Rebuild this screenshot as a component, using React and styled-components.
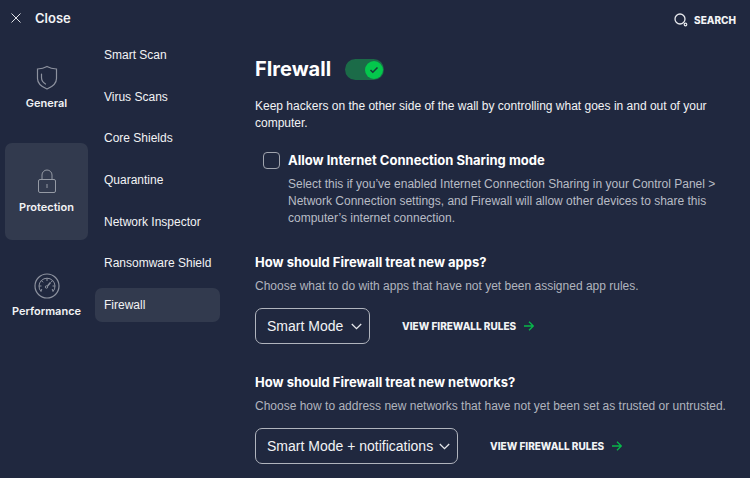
import React, { useState } from "react";
import styled, { createGlobalStyle } from "styled-components";

const menuItems = [
  "Smart Scan",
  "Virus Scans",
  "Core Shields",
  "Quarantine",
  "Network Inspector",
  "Ransomware Shield",
  "Firewall",
];

export default function App() {
  const [enabled, setEnabled] = useState(true);
  return (
    <>
      <GlobalStyle />
      <TopBar>
        <CloseButton type="button">
          <CloseIcon />
          Close
        </CloseButton>
        <SearchButton type="button">
          <SearchIcon />
          SEARCH
        </SearchButton>
      </TopBar>
      <Columns>
        <Sections aria-label="Sections">
          <SectionLink href="#general">
            <ShieldIcon />
            General
          </SectionLink>
          <SectionLink href="#protection" $active>
            <LockIcon />
            Protection
          </SectionLink>
          <SectionLink href="#performance">
            <GaugeIcon />
            Performance
          </SectionLink>
        </Sections>
        <Menu aria-label="Protection">
          {menuItems.map((item) => (
            <MenuLink href="#" key={item} $active={item === "Firewall"}>
              {item}
            </MenuLink>
          ))}
        </Menu>
        <Content>
          <TitleRow>
            <Title id="title">FIrewall</Title>
            <Switch $on={enabled}>
              <SwitchInput
                type="checkbox"
                role="switch"
                aria-labelledby="title"
                checked={enabled}
                onChange={() => setEnabled(!enabled)}
              />
              <Knob>
                <CheckIcon />
              </Knob>
            </Switch>
          </TitleRow>
          <Intro>
            Keep hackers on the other side of the wall by controlling what goes
            in and out of your computer.
          </Intro>
          <Option>
            <Checkbox type="checkbox" id="sharing" />
            <div>
              <OptionLabel htmlFor="sharing">
                Allow Internet Connection Sharing mode
              </OptionLabel>
              <OptionText>
                Select this if you’ve enabled Internet Connection Sharing in
                your Control Panel &gt; Network Connection settings, and
                Firewall will allow other devices to share this computer’s
                internet connection.
              </OptionText>
            </div>
          </Option>
          <Setting
            id="apps"
            title="How should Firewall treat new apps?"
            text="Choose what to do with apps that have not yet been assigned app rules."
            value="Smart Mode"
          />
          <Setting
            id="networks"
            title="How should Firewall treat new networks?"
            text="Choose how to address new networks that have not yet been set as trusted or untrusted."
            value="Smart Mode + notifications"
            wide
          />
        </Content>
      </Columns>
    </>
  );
}

function Setting({ id, title, text, value, wide }) {
  return (
    <SettingBlock>
      <SettingTitle htmlFor={id}>{title}</SettingTitle>
      <SettingText>{text}</SettingText>
      <Controls>
        <SelectBox>
          <Select id={id} $wide={wide}>
            <option>{value}</option>
          </Select>
          <ChevronIcon />
        </SelectBox>
        <RulesLink href="#rules">
          VIEW FIREWALL RULES
          <ArrowIcon />
        </RulesLink>
      </Controls>
    </SettingBlock>
  );
}

const CloseIcon = () => (
  <svg width="10" height="10" viewBox="0 0 10 10" stroke="#dfe1e6">
    <path d="M.5.5l9 9M9.500.5l-9 9" />
  </svg>
);

const SearchIcon = () => (
  <svg width="14" height="14" viewBox="0 0 14 14" fill="none" stroke="#e6e8ec">
    <circle cx="6" cy="6" r="5" strokeWidth="1.300" />
    <circle cx="11.500" cy="11.500" r="1.300" strokeWidth="1.200" />
    <path d="M9.500 9.500l1.200 1.200" />
  </svg>
);

const ShieldIcon = () => (
  <svg width="26" height="26" viewBox="0 0 26 26" fill="none" stroke="#8d929f" strokeWidth="1.200">
    <path d="M13 1.500c2.800 1.700 5.800 2.400 9.500 2.500v9.500c0 5-3.800 8.200-9.500 10.500-5.700-2.300-9.500-5.500-9.500-10.500V4c3.700-.1 6.700-.8 9.500-2.500z" />
    <path d="M7.500 9v3.500c0 3 1.500 5 4 6.500" strokeLinecap="round" />
  </svg>
);

const LockIcon = () => (
  <svg width="26" height="26" viewBox="0 0 26 26" fill="none" stroke="#959aa5">
    <rect x="4.500" y="10.500" width="17" height="13" rx="1.500" />
    <path d="M8 10.500V6a5 5 0 0 1 10 0v4.500M13 15v4" />
  </svg>
);

const GaugeIcon = () => (
  <svg width="26" height="26" viewBox="0 0 26 26" fill="none" stroke="#8d929f">
    <circle cx="13" cy="13" r="12" strokeWidth="1.200" />
    <path d="M7 18.500a8 8 0 1 1 12 0" />
    <path d="M13 5v3M5 13h2.500M18.500 13h2.500M7.300 7.500l1.800 1.800M18.700 7.500l-1.800 1.800M7 18.500l.8-2.500M19 18.500l-.8-2.500" />
    <circle cx="12.500" cy="14" r="1.200" />
    <path d="M13.500 13l3-3.500" strokeWidth="1.500" />
  </svg>
);

const CheckIcon = () => (
  <svg width="10" height="8" viewBox="0 0 10 8" fill="none" stroke="#163b3a">
    <path d="M1.500 4l2.300 2.300L8.500 1.500" strokeWidth="1.500" />
  </svg>
);

const ChevronIcon = () => (
  <Chevron width="11" height="7" viewBox="0 0 11 7" fill="none" stroke="#e6e8ec">
    <path d="M.8 1l4.700 4.700L10.200 1" strokeWidth="1.300" />
  </Chevron>
);

const ArrowIcon = () => (
  <svg width="10" height="10" viewBox="0 0 10 10" fill="none" stroke="#07b84a">
    <path d="M0 5h9M5 .7L9.300 5 5 9.300" strokeWidth="1.300" />
  </svg>
);

const headingFont = `Inter, "Liberation Sans", sans-serif`;

const GlobalStyle = createGlobalStyle`
  * {
    box-sizing: border-box;
  }
  body {
    margin: 0;
    background: #20283f;
    color: #f2f3f5;
    font-family: "Liberation Sans", Arial, sans-serif;
    font-size: 12px;
    line-height: 17px;
  }
  button,
  select {
    font-family: inherit;
    color: inherit;
  }
  a {
    color: inherit;
    text-decoration: none;
  }
`;

const TopBar = styled.header`
  display: flex;
  align-items: center;
  justify-content: space-between;
  height: 38px;
  padding: 0 14px 3px 11px;
`;

const CloseButton = styled.button`
  display: flex;
  align-items: center;
  gap: 14px;
  padding: 0;
  border: 0;
  background: none;
  font-family: ${headingFont};
  font-size: 13px;
  font-weight: 600;
`;

const SearchButton = styled.button`
  display: flex;
  align-items: center;
  gap: 6px;
  padding: 4px 0 0;
  border: 0;
  background: none;
  font-family: ${headingFont};
  font-size: 10px;
  font-weight: 800;
`;

const Columns = styled.div`
  display: flex;
  align-items: flex-start;
`;

const Sections = styled.nav`
  display: flex;
  flex-direction: column;
  gap: 7px;
  flex: 0 0 83px;
  margin: 1px 7px 0 5px;
`;

const SectionLink = styled.a`
  display: flex;
  flex-direction: column;
  align-items: center;
  gap: 4px;
  height: 97px;
  padding-top: 26px;
  border-radius: 7px;
  background: ${(props) => (props.$active ? "#323a4e" : "none")};
  font-family: ${headingFont};
  font-size: 11px;
  font-weight: 600;
`;

const Menu = styled.nav`
  display: flex;
  flex-direction: column;
  justify-content: space-between;
  flex: 0 0 125px;
  height: 284px;
`;

const MenuLink = styled.a`
  padding: 9px 0 8px 9px;
  border-radius: 7px;
  background: ${(props) => (props.$active ? "#323a4e" : "none")};
  white-space: nowrap;
`;

const Content = styled.main`
  flex: 1;
  min-width: 0;
  padding: 17px 12px 14px 35px;
`;

const TitleRow = styled.div`
  display: flex;
  align-items: center;
  gap: 14px;
`;

const Title = styled.h1`
  margin: 0;
  color: #fff;
  font-family: ${headingFont};
  font-size: 20px;
  font-weight: 700;
  line-height: 29px;
`;

const Switch = styled.label`
  display: flex;
  align-items: center;
  justify-content: ${(props) => (props.$on ? "flex-end" : "flex-start")};
  width: 39px;
  height: 21px;
  padding: 0 1px;
  border-radius: 11px;
  background: ${(props) => (props.$on ? "#1b6b48" : "#4a5163")};
  cursor: pointer;
`;

const SwitchInput = styled.input`
  position: absolute;
  opacity: 0;
  margin: 0;
`;

const Knob = styled.span`
  display: flex;
  align-items: center;
  justify-content: center;
  width: 18px;
  height: 18px;
  border-radius: 50%;
  background: #04c74c;
`;

const Intro = styled.p`
  margin: 14px 0 19px;
`;

const Option = styled.div`
  display: flex;
  align-items: flex-start;
  gap: 8px;
  margin: 0 0 25px 8px;
`;

const Checkbox = styled.input`
  appearance: none;
  flex: none;
  width: 17px;
  height: 17px;
  margin: 1px 0 0;
  border: 1px solid #a0a4ae;
  border-radius: 4px;
`;

const OptionLabel = styled.label`
  display: block;
  color: #fff;
  font-family: ${headingFont};
  font-size: 13px;
  font-weight: 700;
  line-height: 18px;
`;

const OptionText = styled.p`
  margin: 7px 0 0;
  color: #b8bcc5;
`;

const SettingBlock = styled.section`
  margin-bottom: 28px;

  &:last-child {
    margin-bottom: 0;
  }
`;

const SettingTitle = styled.label`
  display: block;
  color: #fff;
  font-family: ${headingFont};
  font-size: 13px;
  font-weight: 700;
  line-height: 20px;
`;

const SettingText = styled.p`
  margin: 6px 0 13px;
  color: #b0b4be;
`;

const Controls = styled.div`
  display: flex;
  align-items: center;
  gap: 32px;
`;

const SelectBox = styled.div`
  display: grid;
  align-items: center;
`;

const Select = styled.select`
  appearance: none;
  grid-area: 1 / 1;
  width: ${(props) => (props.$wide ? "203px" : "115px")};
  height: 36px;
  padding: 0 0 0 11px;
  border: 1px solid #b0b4bd;
  border-radius: 7px;
  background: none;
  font-size: 14px;
`;

const Chevron = styled.svg`
  grid-area: 1 / 1;
  justify-self: end;
  margin-right: 8px;
  pointer-events: none;
`;

const RulesLink = styled.a`
  display: flex;
  align-items: center;
  gap: 8px;
  font-family: ${headingFont};
  font-size: 10px;
  font-weight: 800;
`;
